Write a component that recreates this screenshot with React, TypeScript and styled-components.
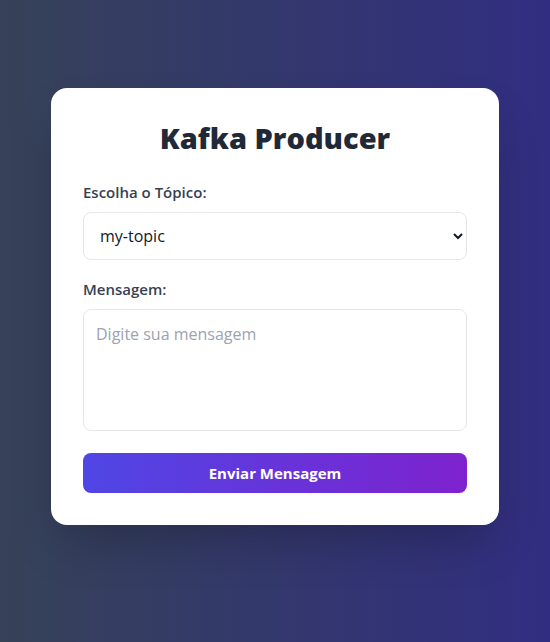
import React from "react";
import styled, { createGlobalStyle } from "styled-components";

const Global = createGlobalStyle`
  html, body { margin: 0; padding: 0; }
  body {
    font-family: "Open Sans", "Noto Sans", sans-serif;
    min-height: 642px;
    background: linear-gradient(to right, #364258, #312e81);
  }
  * { box-sizing: border-box; }
`;

const Page = styled.div`
  min-height: 642px;
  display: flex;
  justify-content: center;
  align-items: flex-start;
  padding-top: 88px;
`;

const Card = styled.form`
  width: 448px;
  background: #ffffff;
  border-radius: 16px;
  padding: 32px;
  box-shadow: 0 25px 50px -12px rgba(0, 0, 0, 0.25);
  display: flex;
  flex-direction: column;
`;

const Title = styled.h1`
  margin: 0 0 24px;
  text-align: center;
  font-size: 29px;
  line-height: 36px;
  font-weight: 800;
  color: #1f2937;
`;

const Label = styled.label`
  display: block;
  font-size: 15px;
  line-height: 24px;
  font-weight: 600;
  color: #374151;
  margin-bottom: 8px;
`;

const Field = styled.div<{ $gap: number }>`
  display: flex;
  flex-direction: column;
  margin-bottom: ${(p) => p.$gap}px;
`;

const Select = styled.select`
  height: 48px;
  width: 100%;
  border: 1px solid #e5e7eb;
  border-radius: 8px;
  padding: 0 12px;
  font-family: inherit;
  font-size: 16px;
  color: #111827;
  background: #ffffff;
`;

const TextArea = styled.textarea`
  width: 100%;
  height: 122px;
  border: 1px solid #e5e7eb;
  border-radius: 8px;
  padding: 12px;
  font-family: inherit;
  font-size: 16px;
  line-height: 24px;
  resize: none;
  display: block;
  &::placeholder { color: #9ca3af; }
`;

const Button = styled.button`
  height: 40px;
  width: 100%;
  border: none;
  border-radius: 8px;
  background: linear-gradient(to right, #4f46e5, #7e22ce);
  color: #ffffff;
  font-family: inherit;
  font-size: 15px;
  font-weight: 700;
  cursor: pointer;
`;

export default function App() {
  return (
    <>
      <Global />
      <Page>
        <Card onSubmit={(e) => e.preventDefault()}>
          <Title>Kafka Producer</Title>
          <Field $gap={17}>
            <Label htmlFor="topic">Escolha o Tópico:</Label>
            <Select id="topic" defaultValue="my-topic">
              <option value="my-topic">my-topic</option>
            </Select>
          </Field>
          <Field $gap={22}>
            <Label htmlFor="msg">Mensagem:</Label>
            <TextArea id="msg" placeholder="Digite sua mensagem" />
          </Field>
          <Button type="submit">Enviar Mensagem</Button>
        </Card>
      </Page>
    </>
  );
}
